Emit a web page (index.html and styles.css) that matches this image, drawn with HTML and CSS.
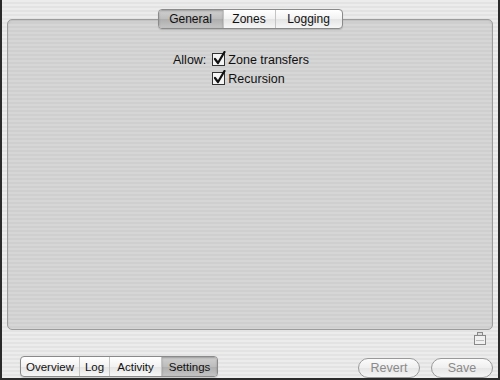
FILE: index.html
```html
<!DOCTYPE html>
<html lang="en">
<head>
  <meta charset="UTF-8" />
  <title>DNS Settings</title>
  <link rel="stylesheet" href="styles.css">
</head>
<body>
  <div class="window">
    <div class="tabs">
      <div class="seg">
        <span class="seg-item tab-general active">General</span>
        <span class="seg-item tab-zones">Zones</span>
        <span class="seg-item tab-logging">Logging</span>
      </div>
    </div>

    <div class="panel">
      <div class="options">
        <span class="label">Allow:</span>
        <label class="check">
          <svg width="14" height="15" viewBox="0 0 14 15">
            <rect x="0.5" y="2.5" width="12" height="12" fill="#f4f4f4" stroke="#333" />
            <path d="M3 8 L6 12 L12.5 1" fill="none" stroke="#111" stroke-width="2.2" stroke-linejoin="round" stroke-linecap="round" />
          </svg>
          Zone transfers
        </label>
        <span></span>
        <label class="check">
          <svg width="14" height="15" viewBox="0 0 14 15">
            <rect x="0.5" y="2.5" width="12" height="12" fill="#f4f4f4" stroke="#333" />
            <path d="M3 8 L6 12 L12.5 1" fill="none" stroke="#111" stroke-width="2.2" stroke-linejoin="round" stroke-linecap="round" />
          </svg>
          Recursion
        </label>
      </div>
    </div>

    <div class="lock-row">
      <svg width="12" height="13" viewBox="0 0 12 13">
        <rect x="3.5" y="0.5" width="5" height="3" fill="#ddd" stroke="#888" />
        <rect x="0.5" y="3.5" width="11" height="9" fill="#f0f0f0" stroke="#888" />
        <line x1="2" y1="8.5" x2="10" y2="8.5" stroke="#bbb" />
      </svg>
    </div>

    <div class="bottom">
      <div class="seg seg-bottom">
        <span class="seg-item tab-overview">Overview</span>
        <span class="seg-item tab-log">Log</span>
        <span class="seg-item tab-activity">Activity</span>
        <span class="seg-item tab-settings active">Settings</span>
      </div>
      <div class="buttons">
        <button class="pill">Revert</button>
        <button class="pill">Save</button>
      </div>
    </div>
  </div>
</body>
</html>
```

FILE: styles.css
```css
* { box-sizing: border-box; }
body {
  margin: 0;
  width: 500px;
  height: 380px;
  overflow: hidden;
  font-family: "Liberation Sans", Arial, sans-serif;
  font-size: 12px;
  color: #111;
}
.window {
  height: 380px;
  display: flex;
  flex-direction: column;
  padding: 9px 5px 0 5px;
  border-left: 2px solid #2a2a2a;
  border-right: 2px solid #2a2a2a;
  border-bottom: 2px solid #2a2a2a;
  background: repeating-linear-gradient(#ececec 0 2px, #e3e3e3 2px 4px);
}
.tabs {
  display: flex;
  justify-content: center;
  margin-bottom: -10px;
  position: relative;
  z-index: 1;
}
.seg {
  display: flex;
  height: 20px;
  border: 1px solid #8a8a8a;
  border-radius: 4px;
  background: linear-gradient(#ffffff, #f2f2f2 50%, #e4e4e4 51%, #f6f6f6);
  box-shadow: 0 1px 1px rgba(0,0,0,0.15);
  overflow: hidden;
}
.seg-item {
  display: flex;
  align-items: center;
  justify-content: center;
  font-size: 12px;
  border-left: 1px solid #c4c4c4;
}
.seg-item:first-child { border-left: none; }
.seg-item.active {
  background: linear-gradient(#d0d0d0, #bdbdbd 50%, #aeaeae 51%, #c4c4c4);
  box-shadow: inset 0 1px 2px rgba(0,0,0,0.25);
}
.tab-general { width: 64px; }
.tab-zones { width: 52px; }
.tab-logging { width: 67px; }
.panel {
  height: 311px;
  border: 1px solid #9c9c9c;
  border-radius: 5px;
  background: repeating-linear-gradient(#d6d6d6 0 2px, #cfcfcf 2px 4px);
  box-shadow: inset 0 1px 2px rgba(0,0,0,0.12);
  padding: 32px 0 0 165px;
}
.options {
  display: grid;
  grid-template-columns: auto auto;
  justify-content: start;
  column-gap: 6px;
  row-gap: 3px;
  align-items: center;
}
.label { text-align: right; font-size: 12.5px; }
.check {
  display: flex;
  align-items: center;
  gap: 2px;
  height: 16px;
  font-size: 12.5px;
}
.check svg { margin-top: -3px; }
.lock-row {
  display: flex;
  justify-content: flex-end;
  padding: 2px 7px 0 0;
  height: 16px;
}
.bottom {
  display: flex;
  justify-content: space-between;
  align-items: center;
  margin-top: 9px;
  padding: 0 0 0 13px;
}
.seg-bottom { height: 21px; }
.seg-bottom .seg-item { font-size: 11.5px; }
.tab-overview { width: 58px; }
.tab-log { width: 30px; }
.tab-activity { width: 52px; }
.tab-settings { width: 56px; }
.buttons {
  display: flex;
  gap: 11px;
  margin-top: 3px;
}
.pill {
  width: 62px;
  height: 20px;
  border: 1px solid #9a9a9a;
  border-radius: 10px;
  background: linear-gradient(#fbfbfb, #efefef 50%, #e6e6e6 51%, #f4f4f4);
  color: #8a8a8a;
  font-family: "Liberation Sans", Arial, sans-serif;
  font-size: 12.5px;
  padding: 0;
}
```
